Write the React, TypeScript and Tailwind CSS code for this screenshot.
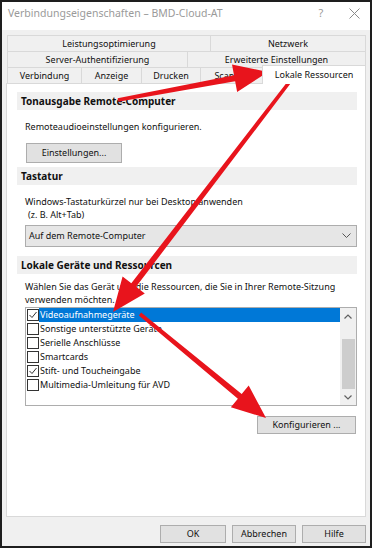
import React from "react";

type Pt = [number, number];

// red annotation arrow as one polygon
function arrowPoints(tail: Pt, tip: Pt, shaft = 6, headLen = 34, headHalf = 14) {
  const dx = tip[0] - tail[0];
  const dy = tip[1] - tail[1];
  const len = Math.hypot(dx, dy);
  const ux = dx / len;
  const uy = dy / len;
  const nx = -uy;
  const ny = ux;
  const bx = tip[0] - ux * headLen;
  const by = tip[1] - uy * headLen;
  const s = shaft / 2;
  const t = s * 0.6;
  const pts: Pt[] = [
    [tail[0] + nx * t, tail[1] + ny * t],
    [bx + nx * s, by + ny * s],
    [bx + nx * headHalf, by + ny * headHalf],
    tip,
    [bx - nx * headHalf, by - ny * headHalf],
    [bx - nx * s, by - ny * s],
    [tail[0] - nx * t, tail[1] - ny * t],
  ];
  return pts.map((p) => p.join(",")).join(" ");
}

function Tab({ label, w, last }: { label: string; w?: string; last?: boolean }) {
  return (
    <div
      className={`h-full border-t border-l border-[#d9d9d9] flex items-center justify-center whitespace-nowrap ${
        last ? "border-r flex-1" : ""
      } ${w ?? ""}`}
    >
      {label}
    </div>
  );
}

function SectionBand({ title }: { title: string }) {
  return (
    <div className="h-[18px] bg-[#f0f0f0] flex items-center pl-[4px] font-bold text-[10px]">
      {title}
    </div>
  );
}

function Checkbox({ checked }: { checked: boolean }) {
  return (
    <span className="w-[12px] h-[12px] border border-[#333333] bg-white flex items-center justify-center shrink-0">
      {checked && (
        <svg width="10" height="10" viewBox="0 0 10 10">
          <polyline points="1.5,5 4,7.5 8.5,2" fill="none" stroke="#333" strokeWidth="1" />
        </svg>
      )}
    </span>
  );
}

const devices = [
  { label: "Videoaufnahmegeräte", checked: true, selected: true },
  { label: "Sonstige unterstützte Geräte", checked: false },
  { label: "Serielle Anschlüsse", checked: false },
  { label: "Smartcards", checked: false },
  { label: "Stift- und Toucheingabe", checked: true },
  { label: "Multimedia-Umleitung für AVD", checked: false },
];

function WinButton({ label, className }: { label: string; className?: string }) {
  return (
    <div
      className={`bg-[#e1e1e1] border border-[#adadad] flex items-center justify-center ${className ?? ""}`}
    >
      {label}
    </div>
  );
}

export default function App() {
  return (
    <div
      className="relative w-[372px] h-[548px] overflow-hidden border-2 border-[#1e1e1e] bg-[#f0f0f0] flex flex-col text-[9px] text-[#111]"
      style={{ fontFamily: '"Noto Sans", "Open Sans", sans-serif' }}
    >
      {/* title bar */}
      <div className="h-[28px] bg-white flex items-start shrink-0">
        <div className="h-[22px] leading-[22px] pl-[6px] text-[10.5px] text-[#9a9a9a] flex-1">
          Verbindungseigenschaften – BMD-Cloud-AT
        </div>
        <div className="h-[22px] leading-[22px] w-[20px] text-center text-[11px] text-[#9a9a9a] mr-[18px]">
          ?
        </div>
        <div className="h-[22px] flex items-center mr-[10px]">
          <svg width="11" height="11" viewBox="0 0 11 11">
            <path d="M0.5 0.5 L10.5 10.5 M10.5 0.5 L0.5 10.5" stroke="#8a8a8a" strokeWidth="1" />
          </svg>
        </div>
      </div>

      {/* body */}
      <div className="flex-1 flex flex-col px-[4px] pt-[5px]">
        <div className="ml-[1px] flex flex-col">
          <div className="flex h-[16px]">
            <Tab label="Leistungsoptimierung" w="w-[203px]" />
            <Tab label="Netzwerk" last />
          </div>
          <div className="flex h-[16px]">
            <Tab label="Server-Authentifizierung" w="w-[180px]" />
            <Tab label="Erweiterte Einstellungen" last />
          </div>
          <div className="flex h-[16px] items-end">
            <Tab label="Verbindung" w="w-[74px]" />
            <Tab label="Anzeige" w="w-[60px]" />
            <Tab label="Drucken" w="w-[59px]" />
            <Tab label="Scanner" w="w-[62px]" />
            <div className="relative z-10 h-[19px] -mb-px w-[104px] -mr-px bg-white border-t border-l border-r border-[#d9d9d9] flex items-start justify-center pt-[2px] whitespace-nowrap">
              Lokale Ressourcen
            </div>
          </div>
        </div>

        {/* page */}
        <div className="flex-1 bg-white border border-[#d9d9d9] pt-[8px] pl-[10px] pr-[8px] flex flex-col">
          <SectionBand title="Tonausgabe Remote-Computer" />
          <div className="ml-[8px] mt-[10px] h-[14px] leading-[14px]">
            Remoteaudioeinstellungen konfigurieren.
          </div>
          <WinButton label="Einstellungen..." className="mt-[9px] ml-[9px] w-[96px] h-[20px]" />

          <div className="mt-[4px]">
            <SectionBand title="Tastatur" />
          </div>
          <div className="ml-[8px] mt-[10px] leading-[13px] whitespace-nowrap">
            Windows-Tastaturkürzel nur bei Desktop anwenden
            <br />
            <span className="pl-[3px]">(z. B. Alt+Tab)</span>
          </div>
          <div className="ml-[8px] mt-[4px] h-[22px] bg-[#e6e6e6] border border-[#adadad] flex items-center pl-[3px] pr-[5px]">
            <span className="flex-1">Auf dem Remote-Computer</span>
            <svg width="9" height="6" viewBox="0 0 9 6">
              <polyline points="0.5,0.5 4.5,4.5 8.5,0.5" fill="none" stroke="#555" strokeWidth="1" />
            </svg>
          </div>

          <div className="mt-[9px]">
            <SectionBand title="Lokale Geräte und Ressourcen" />
          </div>
          <div className="ml-[8px] mt-[6px] leading-[13px] whitespace-nowrap">
            Wählen Sie das Gerät und die Ressourcen, die Sie in Ihrer Remote-Sitzung
            <br />
            verwenden möchten.
          </div>

          {/* device list */}
          <div className="ml-[8px] mt-[1px] h-[99px] border border-[#adadad] flex">
            <div className="flex-1 flex flex-col pl-[1px]">
              {devices.map((d) => (
                <div key={d.label} className="h-[14px] flex items-center">
                  <Checkbox checked={d.checked} />
                  <span
                    className={`flex-1 h-full flex items-center pl-px whitespace-nowrap ${
                      d.selected ? "bg-[#0078d7] text-white" : ""
                    }`}
                  >
                    {d.label}
                  </span>
                </div>
              ))}
            </div>
            <div className="w-[16px] bg-[#f0f0f0] flex flex-col items-center">
              <div className="h-[16px] flex items-center justify-center">
                <svg width="8" height="5" viewBox="0 0 8 5">
                  <polyline points="0.5,4.5 4,1 7.5,4.5" fill="none" stroke="#606060" strokeWidth="1.2" />
                </svg>
              </div>
              <div className="mt-[15px] w-[13px] h-[50px] bg-[#cdcdcd]" />
              <div className="flex-1" />
              <div className="h-[16px] flex items-center justify-center">
                <svg width="8" height="5" viewBox="0 0 8 5">
                  <polyline points="0.5,0.5 4,4 7.5,0.5" fill="none" stroke="#606060" strokeWidth="1.2" />
                </svg>
              </div>
            </div>
          </div>

          <WinButton
            label="Konfigurieren ..."
            className="self-end mt-[10px] mr-[1px] w-[99px] h-[18px]"
          />
        </div>

        {/* footer */}
        <div className="flex justify-end gap-[6px] pt-[8px] pb-[3px]">
          <WinButton label="OK" className="w-[66px] h-[18px]" />
          <WinButton label="Abbrechen" className="w-[64px] h-[18px]" />
          <WinButton label="Hilfe" className="w-[64px] h-[18px]" />
        </div>
      </div>

      {/* annotation arrows */}
      <svg className="absolute left-0 top-0 pointer-events-none" width="372" height="548" viewBox="2 2 372 548">
        <g fill="#e8141c">
          <polygon points={arrowPoints([118, 100], [268, 72])} />
          <polygon points={arrowPoints([291, 80], [113, 312])} />
          <polygon points={arrowPoints([140, 314], [266, 418])} />
        </g>
      </svg>
    </div>
  );
}
